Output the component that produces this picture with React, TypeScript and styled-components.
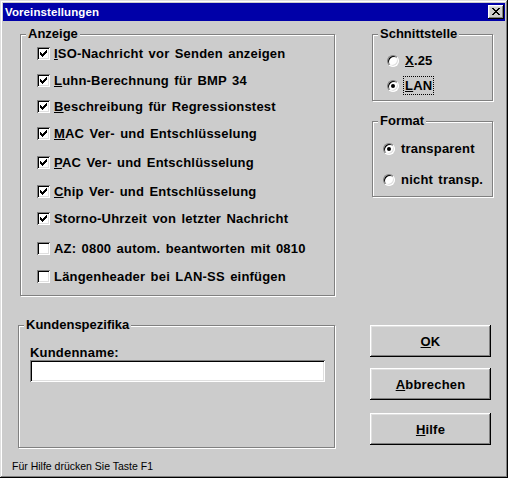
import React from "react";
import styled, { createGlobalStyle } from "styled-components";

const FACE = "#cccccc";
const FONT = `"Liberation Sans", Arial, sans-serif`;

const Global = createGlobalStyle`
  html, body { margin: 0; padding: 0; background: ${FACE}; }
  body { font-family: ${FONT}; color: #000; }
`;

const Window = styled.div`
  box-sizing: border-box;
  width: 508px;
  height: 478px;
  padding: 3px;
  background: ${FACE};
  display: flex;
  flex-direction: column;
  box-shadow: inset -1px -1px 0 #000, inset 1px 1px 0 #dfdfdf,
    inset -2px -2px 0 #808080, inset 2px 2px 0 #fff;
`;

const TitleBar = styled.div`
  height: 18px;
  flex: none;
  background: #0000a8;
  display: flex;
  align-items: center;
  justify-content: space-between;
  padding: 0 1px 0 2px;
  color: #fff;
`;

const Title = styled.span`
  font: bold 11.5px/18px ${FONT};
  letter-spacing: 0.1px;
`;

const CloseButton = styled.button`
  box-sizing: border-box;
  width: 16px;
  height: 14px;
  padding: 3px 0 0 4px;
  border: 0;
  margin: 0;
  background: ${FACE};
  display: flex;
  align-items: flex-start;
  justify-content: flex-start;
  box-shadow: inset -1px -1px 0 #000, inset 1px 1px 0 #fff,
    inset -2px -2px 0 #808080, inset 2px 2px 0 #dfdfdf;
`;

const Body = styled.div`
  flex: 1;
  display: flex;
  padding-left: 15px;
  gap: 35px;
`;

const LeftColumn = styled.div`
  width: 317px;
  display: flex;
  flex-direction: column;
  align-items: flex-start;
`;

const RightColumn = styled.div`
  width: 124px;
  display: flex;
  flex-direction: column;
  align-items: flex-start;
`;

const Group = styled.div<{
  $w: number;
  $h: number;
  $top: number;
  $left: number;
  $pt: number;
  $pl: number;
}>`
  position: relative;
  box-sizing: border-box;
  width: ${(p) => p.$w}px;
  height: ${(p) => p.$h}px;
  margin-top: ${(p) => p.$top}px;
  margin-left: ${(p) => p.$left}px;
  padding: ${(p) => p.$pt}px 0 0 ${(p) => p.$pl}px;
  border: 1px solid #808080;
  box-shadow: inset 1px 1px 0 #fff, 1px 1px 0 #fff;
  display: flex;
  flex-direction: column;
  align-items: flex-start;
`;

const Caption = styled.span`
  position: absolute;
  top: -9px;
  left: 5px;
  padding: 0 2px;
  background: ${FACE};
  font: bold 13px/15px ${FONT};
  white-space: nowrap;
`;

const CheckRow = styled.label<{ $gap: number }>`
  display: flex;
  align-items: center;
  gap: 4px;
  height: 15px;
  margin-top: ${(p) => p.$gap}px;
  font: bold 13px/15px ${FONT};
  letter-spacing: 0.2px;
  word-spacing: 1.5px;
  white-space: nowrap;
`;

const CheckBox = styled.span`
  box-sizing: border-box;
  width: 13px;
  height: 13px;
  flex: none;
  background: #fff;
  display: flex;
  align-items: center;
  justify-content: center;
  box-shadow: inset 1px 1px 0 #808080, inset -1px -1px 0 #fff,
    inset 2px 2px 0 #000, inset -2px -2px 0 #dfdfdf;
`;

const RadioRow = styled.label<{ $gap: number }>`
  display: flex;
  align-items: flex-start;
  gap: 4px;
  height: 19px;
  margin-top: ${(p) => p.$gap}px;
  font: bold 13px/15px ${FONT};
  letter-spacing: 0.2px;
  word-spacing: 1.5px;
  white-space: nowrap;
`;

const RadioCircle = styled.span<{ $on: boolean }>`
  position: relative;
  box-sizing: border-box;
  width: 12px;
  height: 12px;
  margin-top: 4px;
  flex: none;
  border-radius: 50%;
  background: #fff;
  border: 1px solid;
  border-color: #808080 #fff #fff #808080;
  box-shadow: inset 1px 1px 0 #000, inset -1px -1px 0 #dfdfdf;
  &::after {
    content: "";
    display: ${(p) => (p.$on ? "block" : "none")};
    position: absolute;
    left: 3px;
    top: 3px;
    width: 4px;
    height: 4px;
    border-radius: 50%;
    background: #000;
  }
`;

const RadioText = styled.span<{ $focus: boolean }>`
  padding: 1px 1px;
  border: 1px dotted ${(p) => (p.$focus ? "#000" : "transparent")};
`;

const Mn = styled.span`
  text-decoration: underline;
  text-underline-offset: 1px;
`;

const FieldLabel = styled.div`
  font: bold 13px/15px ${FONT};
  letter-spacing: 0.2px;
`;

const TextInput = styled.input`
  box-sizing: border-box;
  width: 295px;
  height: 22px;
  border: 0;
  padding: 0 4px;
  margin: 0;
  background: #fff;
  outline: none;
  font: 13px ${FONT};
  box-shadow: inset 1px 1px 0 #808080, inset -1px -1px 0 #fff,
    inset 2px 2px 0 #000, inset -2px -2px 0 #dfdfdf;
`;

const PushButton = styled.button<{ $top: number; $h: number }>`
  box-sizing: border-box;
  width: 121px;
  height: ${(p) => p.$h}px;
  margin: ${(p) => p.$top}px 0 0 0;
  padding: 0;
  border: 0;
  background: ${FACE};
  color: #000;
  font: bold 13px/15px ${FONT};
  letter-spacing: 0.2px;
  display: flex;
  align-items: center;
  justify-content: center;
  box-shadow: inset -1px -1px 0 #000, inset 1px 1px 0 #fff,
    inset -2px -2px 0 #808080, inset 2px 2px 0 #dfdfdf;
`;

const StatusBar = styled.div`
  flex: none;
  height: 14px;
  margin-bottom: 2px;
  padding-left: 9px;
  font: 10.5px/14px ${FONT};
  white-space: nowrap;
`;

const CloseGlyph = () => (
  <svg width="8" height="7" viewBox="0 0 8 7" shapeRendering="crispEdges">
    <path
      fill="#000"
      d="M0 0h2v1H0zM6 0h2v1H6zM1 1h2v1H1zM5 1h2v1H5zM2 2h4v1H2zM3 3h2v1H3zM2 4h4v1H2zM1 5h2v1H1zM5 5h2v1H5zM0 6h2v1H0zM6 6h2v1H6z"
    />
  </svg>
);

const CheckGlyph = () => (
  <svg width="7" height="7" viewBox="0 0 7 7" shapeRendering="crispEdges">
    <path
      fill="#000"
      d="M6 0h1v1H6zM5 1h2v1H5zM0 2h1v1H0zM4 2h3v1H4zM0 3h2v1H0zM3 3h3v1H3zM0 4h5v1H0zM1 5h3v1H1zM2 6h1v1H2z"
    />
  </svg>
);

type CheckItem = { m: string; rest: string; on: boolean; gap: number };

const checks: CheckItem[] = [
  { m: "I", rest: "SO-Nachricht vor Senden anzeigen", on: true, gap: 0 },
  { m: "L", rest: "uhn-Berechnung für BMP 34", on: true, gap: 12 },
  { m: "B", rest: "eschreibung für Regressionstest", on: true, gap: 11 },
  { m: "M", rest: "AC Ver- und Entschlüsselung", on: true, gap: 12 },
  { m: "P", rest: "AC Ver- und Entschlüsselung", on: true, gap: 14 },
  { m: "C", rest: "hip Ver- und Entschlüsselung", on: true, gap: 14 },
  { m: "", rest: "Storno-Uhrzeit von letzter Nachricht", on: true, gap: 12 },
  { m: "", rest: "AZ: 0800 autom. beantworten mit 0810", on: false, gap: 15 },
  { m: "", rest: "Längenheader bei LAN-SS einfügen", on: false, gap: 13 },
];

export default function App() {
  return (
    <>
      <Global />
      <Window>
        <TitleBar>
          <Title>Voreinstellungen</Title>
          <CloseButton aria-label="Schließen">
            <CloseGlyph />
          </CloseButton>
        </TitleBar>
        <Body>
          <LeftColumn>
            <Group $w={315} $h={262} $top={13} $left={2} $pt={11} $pl={16}>
              <Caption>Anzeige</Caption>
              {checks.map((c, i) => (
                <CheckRow key={i} $gap={c.gap}>
                  <CheckBox>{c.on && <CheckGlyph />}</CheckBox>
                  <span>
                    {c.m && <Mn>{c.m}</Mn>}
                    {c.rest}
                  </span>
                </CheckRow>
              ))}
            </Group>
            <Group $w={317} $h={123} $top={29} $left={0} $pt={19} $pl={11}>
              <Caption>Kundenspezifika</Caption>
              <FieldLabel>Kundenname:</FieldLabel>
              <TextInput type="text" defaultValue="" />
            </Group>
          </LeftColumn>
          <RightColumn>
            <Group $w={121} $h={67} $top={13} $left={2} $pt={16} $pl={14}>
              <Caption>Schnittstelle</Caption>
              <RadioRow $gap={0}>
                <RadioCircle $on={false} />
                <RadioText $focus={false}>
                  <Mn>X</Mn>.25
                </RadioText>
              </RadioRow>
              <RadioRow $gap={6}>
                <RadioCircle $on={true} />
                <RadioText $focus={true}>
                  <Mn>L</Mn>AN
                </RadioText>
              </RadioRow>
            </Group>
            <Group $w={121} $h={76} $top={20} $left={2} $pt={17} $pl={10}>
              <Caption>Format</Caption>
              <RadioRow $gap={0}>
                <RadioCircle $on={true} />
                <RadioText $focus={false}>transparent</RadioText>
              </RadioRow>
              <RadioRow $gap={12}>
                <RadioCircle $on={false} />
                <RadioText $focus={false}>nicht transp.</RadioText>
              </RadioRow>
            </Group>
            <PushButton $top={128} $h={32}>
              <Mn>O</Mn>K
            </PushButton>
            <PushButton $top={11} $h={32}>
              <Mn>A</Mn>bbrechen
            </PushButton>
            <PushButton $top={13} $h={32}>
              <Mn>H</Mn>ilfe
            </PushButton>
          </RightColumn>
        </Body>
        <StatusBar>Für Hilfe drücken Sie Taste F1</StatusBar>
      </Window>
    </>
  );
}
